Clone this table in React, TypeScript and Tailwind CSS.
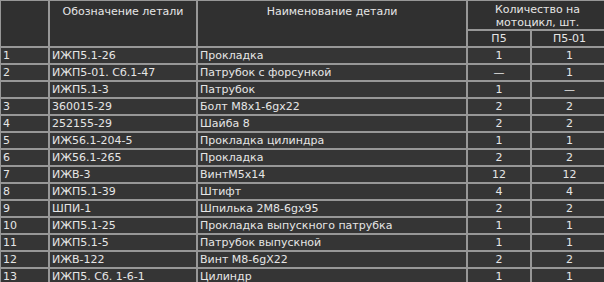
const rows: [string, string, string, string, string][] = [
  ["1", "ИЖП5.1-26", "Прокладка", "1", "1"],
  ["2", "ИЖП5-01. Сб.1-47", "Патрубок с форсункой", "—", "1"],
  ["", "ИЖП5.1-3", "Патрубок", "1", "—"],
  ["3", "360015-29", "Болт М8х1-6gх22", "2", "2"],
  ["4", "252155-29", "Шайба 8", "2", "2"],
  ["5", "ИЖ56.1-204-5", "Прокладка цилиндра", "1", "1"],
  ["6", "ИЖ56.1-265", "Прокладка", "2", "2"],
  ["7", "ИЖВ-3", "ВинтМ5х14", "12", "12"],
  ["8", "ИЖП5.1-39", "Штифт", "4", "4"],
  ["9", "ШПИ-1", "Шпилька 2М8-6gх95", "2", "2"],
  ["10", "ИЖП5.1-25", "Прокладка выпускного патрубка", "1", "1"],
  ["11", "ИЖП5.1-5", "Патрубок выпускной", "1", "1"],
  ["12", "ИЖВ-122", "Винт М8-6gХ22", "2", "2"],
  ["13", "ИЖП5. Сб. 1-6-1", "Цилиндр", "1", "1"],
];

export default function App() {
  const cell = "border-2 border-[#979797] px-[2px] leading-none";
  return (
    <div className="h-[282px] w-[604px] overflow-hidden bg-[#353535] font-['DejaVu_Sans',sans-serif] text-[11px] text-[#e6e6e6]">
      <table className="w-[608px] table-fixed border-collapse -mt-[1px] -ml-[1px]">
        <colgroup>
          <col className="w-[49px]" />
          <col className="w-[148px]" />
          <col className="w-[270px]" />
          <col className="w-[64px]" />
          <col className="w-[77px]" />
        </colgroup>
        <thead className="bg-[#303030]">
          <tr className="h-[29px]">
            <th rowSpan={2} className={cell} />
            <th rowSpan={2} className={`${cell} pt-[5px] align-top font-normal`}>
              Обозначение летали
            </th>
            <th rowSpan={2} className={`${cell} pt-[5px] align-top font-normal`}>
              Наименование детали
            </th>
            <th colSpan={2} className={`${cell} pt-[2px] font-normal`}>
              <div className="leading-[13px]">Количество на</div>
              <div className="leading-[13px]">мотоцикл, шт.</div>
            </th>
          </tr>
          <tr className="h-[17px]">
            <th className={`${cell} font-normal`}>П5</th>
            <th className={`${cell} font-normal`}>П5-01</th>
          </tr>
        </thead>
        <tbody>
          {rows.map((r, i) => (
            <tr key={i} className="h-[17px]">
              <td className={cell}>{r[0]}</td>
              <td className={cell}>{r[1]}</td>
              <td className={cell}>{r[2]}</td>
              <td className={`${cell} text-center`}>{r[3]}</td>
              <td className={`${cell} text-center`}>{r[4]}</td>
            </tr>
          ))}
        </tbody>
      </table>
    </div>
  );
}
